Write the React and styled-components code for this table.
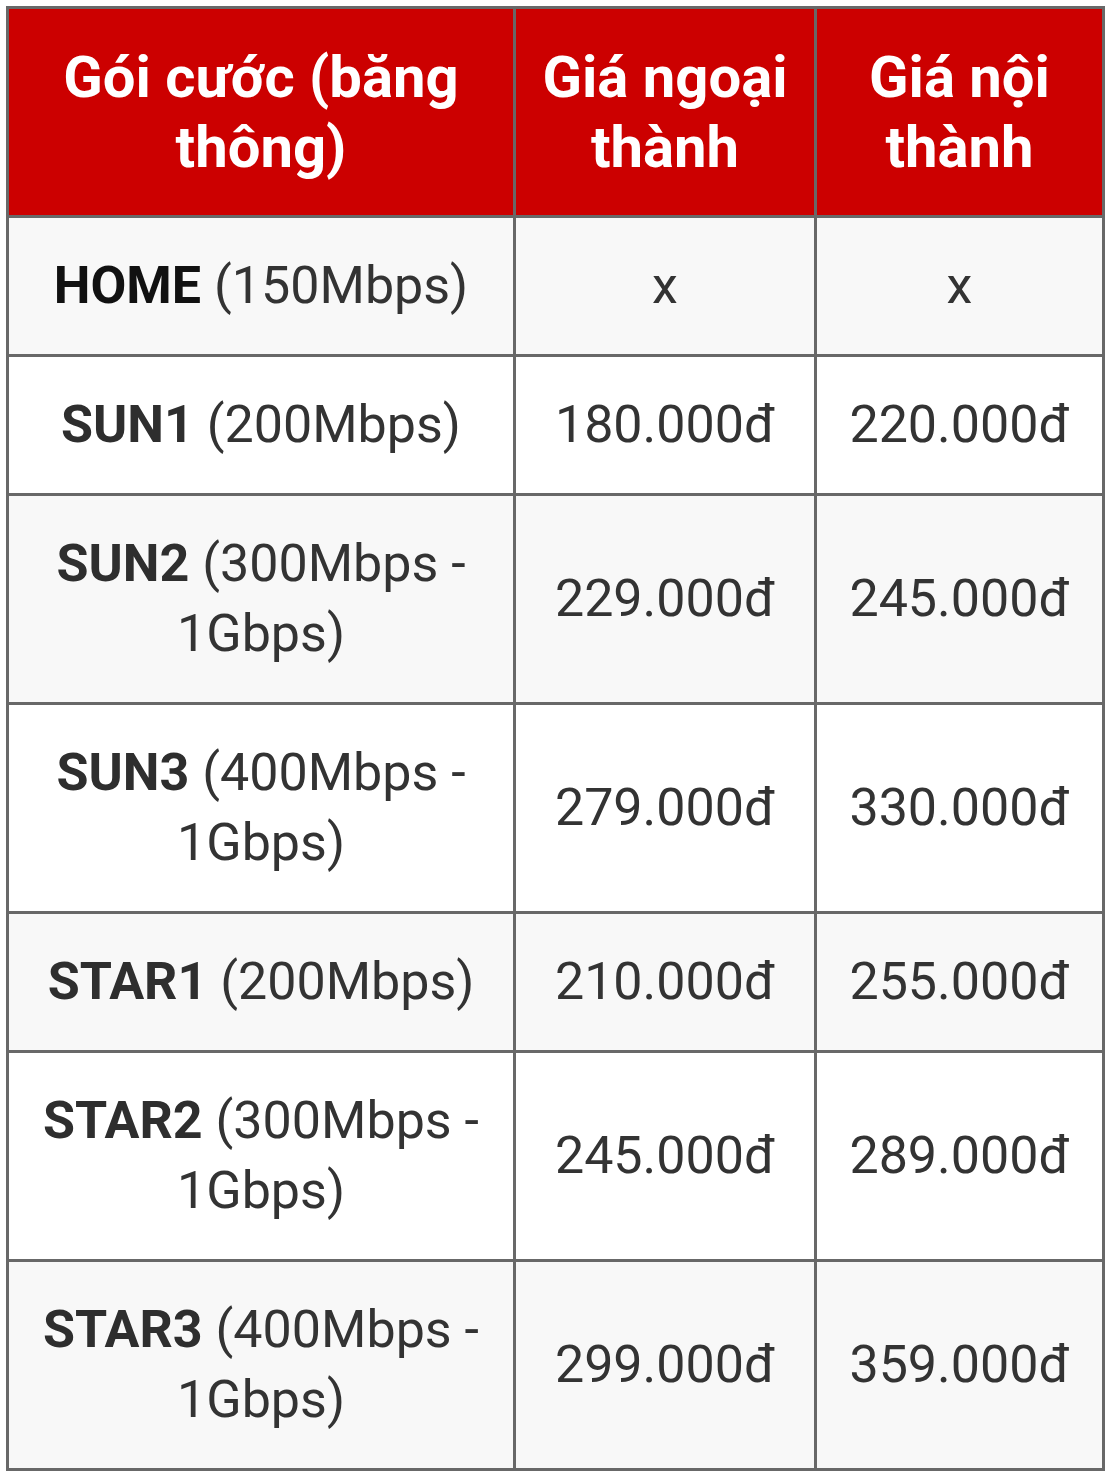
import React from "react";
import styled, { createGlobalStyle } from "styled-components";

const Global = createGlobalStyle`
  html, body { margin: 0; padding: 0; background: #ffffff; }
  body { padding: 6px; font-family: Roboto, "Noto Sans", "Liberation Sans", sans-serif; }
`;

const Table = styled.table`
  width: 1096px;
  border-collapse: collapse;
  table-layout: fixed;
  font-family: Roboto, "Noto Sans", "Liberation Sans", sans-serif;
  font-size: 52px;
  line-height: 70px;
`;

const Col = styled.col`
  width: ${(p) => p.$w}px;
`;

const HeadCell = styled.th`
  background: #cc0000;
  color: #ffffff;
  font-size: 58px;
  font-weight: 700;
  text-align: center;
  vertical-align: middle;
  padding: 33px 16px;
  border: 3px solid #686868;
`;

const Row = styled.tr`
  background: ${(p) => (p.$alt ? "#f8f8f8" : "#ffffff")};
`;

const Cell = styled.td`
  color: #333333;
  font-weight: 400;
  text-align: center;
  vertical-align: middle;
  padding: 33px 18px;
  border: 3px solid #686868;
`;

const Name = styled.strong`
  font-weight: 700;
  color: ${(p) => (p.$dark ? "#111111" : "#2e2e2e")};
`;

const rows = [
  { name: "HOME", speed: "(150Mbps)", out: "x", inn: "x", dark: true },
  { name: "SUN1", speed: "(200Mbps)", out: "180.000đ", inn: "220.000đ" },
  { name: "SUN2", speed: "(300Mbps - 1Gbps)", out: "229.000đ", inn: "245.000đ" },
  { name: "SUN3", speed: "(400Mbps - 1Gbps)", out: "279.000đ", inn: "330.000đ" },
  { name: "STAR1", speed: "(200Mbps)", out: "210.000đ", inn: "255.000đ" },
  { name: "STAR2", speed: "(300Mbps - 1Gbps)", out: "245.000đ", inn: "289.000đ" },
  { name: "STAR3", speed: "(400Mbps - 1Gbps)", out: "299.000đ", inn: "359.000đ" },
];

export default function App() {
  return (
    <>
      <Global />
      <Table>
        <colgroup>
          <Col $w={507} />
          <Col $w={301} />
          <Col $w={288} />
        </colgroup>
        <thead>
          <tr>
            <HeadCell>Gói cước (băng thông)</HeadCell>
            <HeadCell>Giá ngoại thành</HeadCell>
            <HeadCell>Giá nội thành</HeadCell>
          </tr>
        </thead>
        <tbody>
          {rows.map((r, i) => (
            <Row key={r.name} $alt={i % 2 === 0}>
              <Cell>
                <Name $dark={r.dark}>{r.name}</Name> {r.speed}
              </Cell>
              <Cell>{r.out}</Cell>
              <Cell>{r.inn}</Cell>
            </Row>
          ))}
        </tbody>
      </Table>
    </>
  );
}
